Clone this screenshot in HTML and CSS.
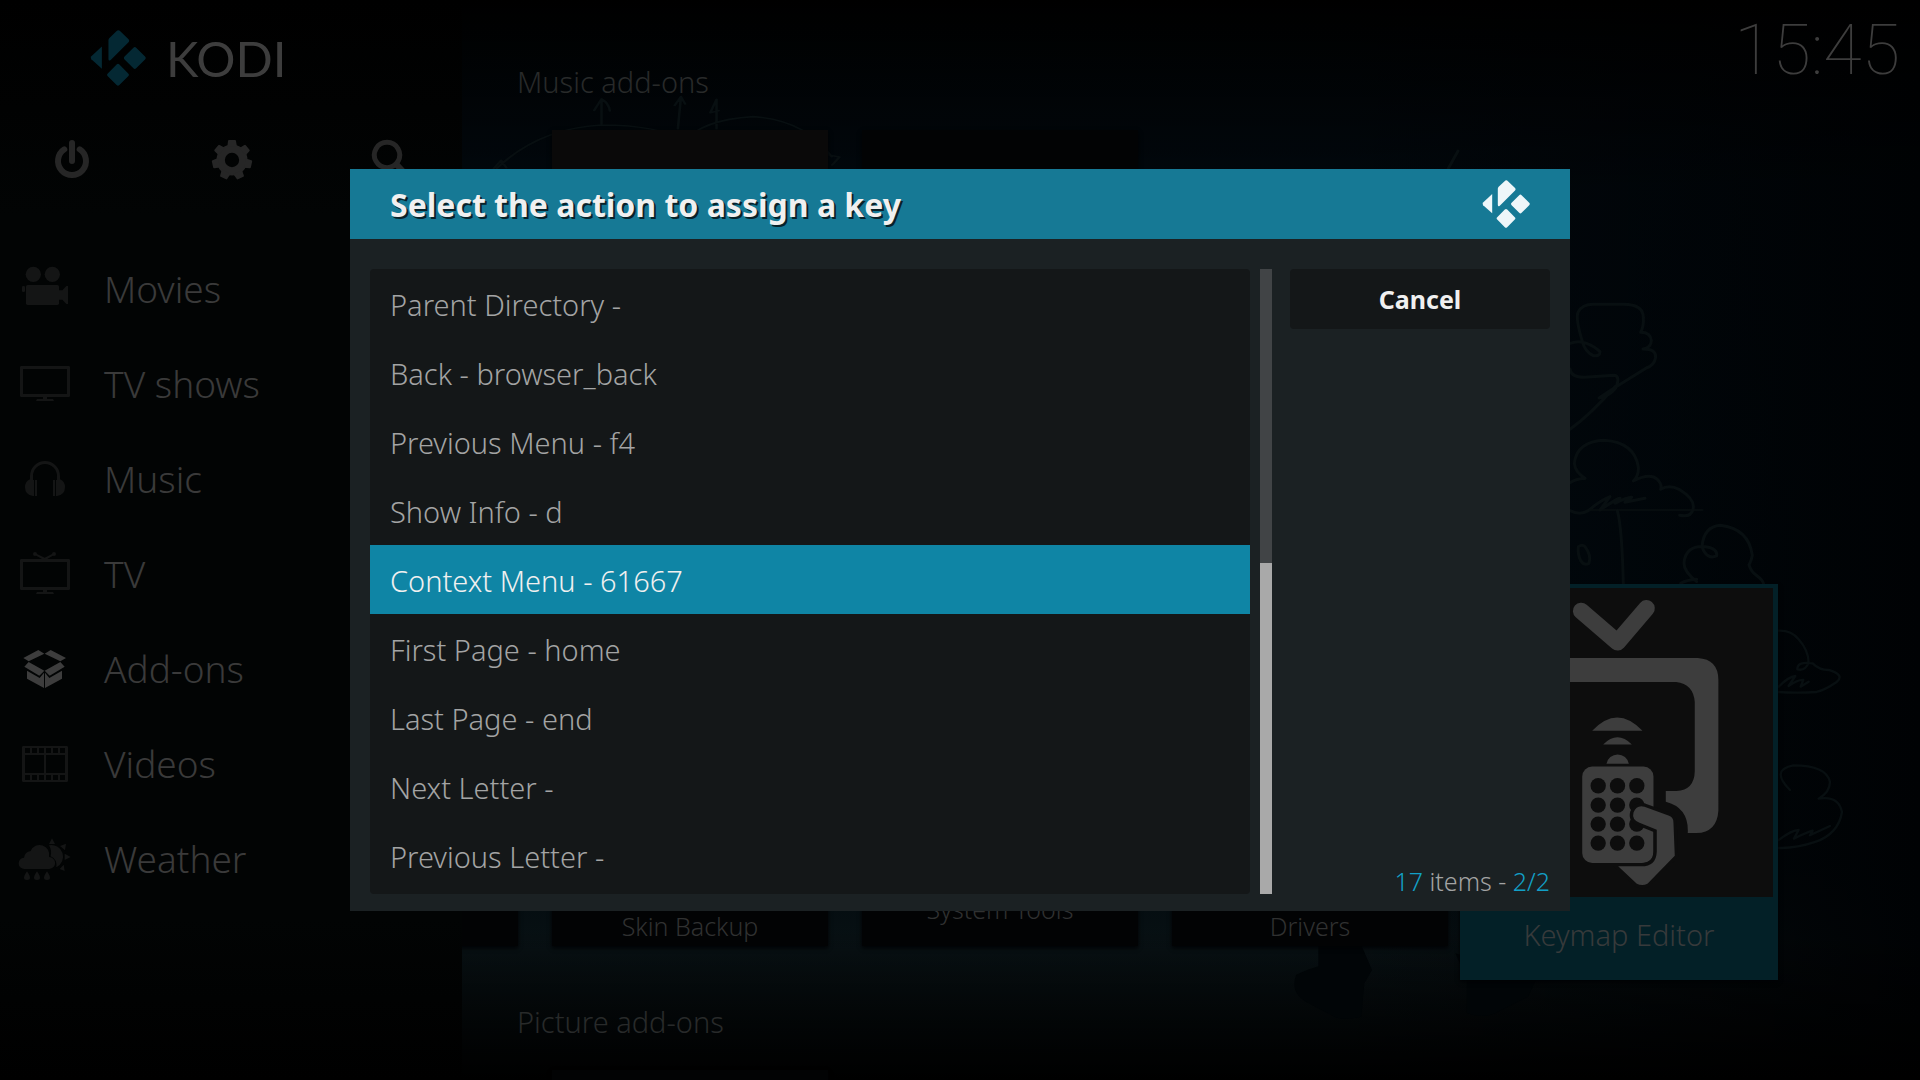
FILE: index.html
```html
<!DOCTYPE html>
<html lang="en">
<head>
    <meta charset="UTF-8">
    <meta name="viewport" content="width=device-width, initial-scale=1.0">
    <title>Kodi</title>
    <link rel="stylesheet" href="styles.css">
</head>
<body>

<div class="home">
    <nav class="sidebar">
        <div class="brand">
            <svg class="brand-mark" viewBox="269 89 168 170">
                <path d="M324 120q0-4 3-7l21-20q6-6 12 0l25 24q4 5 0 9l-54 54q-7 5-7-3z"/>
                <path d="M304 139v68l-32-29q-4-4 0-9z"/>
                <rect x="379" y="149" width="50" height="50" rx="6" transform="rotate(45 404 174)"/>
                <rect x="328" y="200" width="50" height="50" rx="6" transform="rotate(45 353 225)"/>
            </svg>
            <span class="brand-name">KODI</span>
        </div>

        <div class="tools">
            <button class="tool" aria-label="Power">
                <svg viewBox="144 408 144 144">
                    <path class="line" d="M193 448a42 42 0 1 0 46 0M216 429v54"/>
                </svg>
            </button>
            <button class="tool" aria-label="Settings">
                <svg viewBox="624 408 144 144">
                    <circle class="gear-ring" cx="696" cy="480" r="34"/>
                    <path id="tooth" d="M682 440l2-17q0-3 3-3h18q3 0 3 3l3 17z"/>
                    <use href="#tooth" transform="rotate(51.4 696 480)"/>
                    <use href="#tooth" transform="rotate(102.9 696 480)"/>
                    <use href="#tooth" transform="rotate(154.3 696 480)"/>
                    <use href="#tooth" transform="rotate(205.7 696 480)"/>
                    <use href="#tooth" transform="rotate(257.1 696 480)"/>
                    <use href="#tooth" transform="rotate(308.6 696 480)"/>
                </svg>
            </button>
            <button class="tool" aria-label="Search">
                <svg viewBox="1104 408 144 144">
                    <path class="line thin" d="M1161 427a38 38 0 1 0 .1 0z"/>
                    <path class="line" d="M1190 494l32 34"/>
                </svg>
            </button>
        </div>

        <ul class="menu">
            <li><a href="#movies">
                <svg viewBox="54 105 162 144">
                    <circle cx="100" cy="133" r="23"/><circle cx="157" cy="133" r="23"/>
                    <rect x="78" y="165" width="99" height="60" rx="5"/>
                    <rect x="66" y="168" width="9" height="18" rx="4"/>
                    <path d="M177 181h10l12-13h5v54h-5l-12-13h-10z"/>
                </svg>
                Movies</a></li>
            <li><a href="#tvshows">
                <svg viewBox="54 390 162 144">
                    <path fill-rule="evenodd" d="M64 408h142q4 0 4 4v85q0 4-4 4H64q-4 0-4-4v-85q0-4 4-4zM69 417v75h132v-75z"/>
                    <path d="M129 501h12v6h18l3 6h-54l3-6h18z"/>
                </svg>
                TV shows</a></li>
            <li><a href="#music">
                <svg viewBox="54 675 162 144">
                    <path d="M90 748v-10a45 45 0 0 1 90 0v10q15 6 15 24 0 22-24 26h-3v-48h3v-12a36 36 0 0 0-72 0v12h3v48h-3q-24-4-24-26 0-18 15-24z"/>
                    <path d="M105 750h6v48h-6zM159 750h6v48h-6z"/>
                </svg>
                Music</a></li>
            <li><a href="#tv">
                <svg viewBox="54 0 162 144">
                    <path fill-rule="evenodd" d="M64 27h142q4 0 4 4v85q0 4-4 4H64q-4 0-4-4V31q0-4 4-4zM69 36v75h132V36z"/>
                    <path d="M129 120h12v6h18l3 6h-54l3-6h18z"/>
                    <circle cx="105" cy="12" r="6"/><circle cx="162" cy="12" r="6"/>
                    <path d="M105 9l29 14 28-14v6l-20 12h-16l-21-12z"/>
                </svg>
                TV</a></li>
            <li class="current"><a href="#addons">
                <svg viewBox="54 285 162 144">
                    <path d="M115 300l18 11-47 23-16-10zM152 300l-18 11 47 23 17-10z"/>
                    <path d="M86 336l47 26-15 15-45-27zM181 336l-47 26 15 15 45-27z"/>
                    <path d="M81 362l38 22 13-16v46l-51-28zM186 362l-38 22-13-16v46l51-28z"/>
                </svg>
                Add-ons</a></li>
            <li><a href="#videos">
                <svg viewBox="54 570 162 144">
                    <path fill-rule="evenodd" d="M70 588h130q4 0 4 4v100q0 4-4 4H70q-4 0-4-4V592q0-4 4-4zM75 615v54h57v-54zM138 615v54h57v-54zM75 594v15h15v-15zM96 594v15h15v-15zM117 594v15h15v-15zM138 594v15h15v-15zM159 594v15h15v-15zM180 594v15h15v-15zM75 675v15h15v-15zM96 675v15h15v-15zM117 675v15h15v-15zM138 675v15h15v-15zM159 675v15h15v-15zM180 675v15h15v-15z"/>
                </svg>
                Videos</a></li>
            <li><a href="#weather">
                <svg viewBox="54 855 162 144">
                    <path d="M74 957a17 17 0 0 1-2-34q3-18 20-20a29 29 0 0 1 55 18 18 18 0 0 1 1 36z"/>
                    <path d="M147 886a35 35 0 0 1 22 66q3-24-17-33 4-18-5-33z"/>
                    <path d="M156 865l9 17h-18zM198 881l-3 20-15-13zM212 921l-18 9v-19zM194 963l-15-6 12-13z"/>
                    <path d="M81 964q18 26 0 26t0-26zM111 964q18 26 0 26t0-26zM141 964q18 26 0 26t0-26z"/>
                </svg>
                Weather</a></li>
        </ul>
    </nav>

    <main class="content">
        <!-- chalk drawing wallpaper -->
        <svg class="wallpaper" viewBox="462 0 1458 1080" preserveAspectRatio="xMaxYMin slice" aria-hidden="true">
            <g transform="translate(1560 280) scale(.3333)" stroke-width="9">
                <path d="M30 190q25-10 50 0t40 25q0 15-20 12-25-12-32-40-22-70-14-90 12-24 46-24h90q60 0 60 40 2 25-8 44 30 0 32 25 0 20-25 25 40 0 38 25-4 25-28 32l-100 62-42 28q30-5 50-30 15-35-4-38l-90 6q-40 0-43-25M165 320q-70 80-135 128"/>
                <path d="M75 595q-30-20-32-45 8-66 90-69 90 6 102 80 2 25-15 42 50-25 72-5 15 15 10 30 25-15 55 0 50 30 42 60-6 25-40 18M30 608q20-12 45-13M30 692q30 15 55 0 35-30 65-42l-30 40q60-40 60-35l-15 15q40-20 50-18l-20 15 60-12"/>
                <path stroke-width="5" d="M90 690h338"/>
                <path d="M172 692q14 50 18 220M55 800q12-8 20 0 20 26 12 50-15 8-25-8-10-20-7-42"/>
                <path d="M410 905q-38-30-38-55 4-55 64-50 38 5 34 28-30 12-44-28 5-60 55-64 85 10 96 90-4 20-10 28 5 20 22 32 20 15 22 26M410 898q-30 2-48 12"/>
            </g>
            <g transform="translate(1380 560) scale(.3333)" stroke-width="7">
                <path d="M1194 212q40-2 62 26 30 34 30 70-10 26-34 20 0-25 46-18 20 20 48 20 50 15 24 36-35 24-60 30-60 4-116 0M1196 380q30-30 50-32l-20 30q30-20 44-18l-8 20 24-15"/>
                <path d="M1230 690q-60-60 10-74 100 0 110 50 0 30-34 50 60-10 70 40-10 65-80 90-60 20-110 18M1196 840q40-30 60-30l-14 26q40-20 56-24l-8 14 60-28"/>
            </g>
            <g transform="translate(340 60) scale(.523 .3333)" stroke-width="5">
                <path d="M300 325q80-120 200-130 110 0 160 50 30-65 130-75 100 10 150 120M500 192v-75l-14 34M500 117q14 12 16 36M646 206l6-96-12 26M652 110l8 22M720 206v-88l-12 40 16-6M294 325l14-24 10 22M935 285l20 6-14 24"/>
            </g>
            <g class="shoes" transform="translate(1000 840) scale(.3827 .3333)">
                <path d="M832 310h110l30 80-20 40-8 100q-50 12-70 0l-60-36q-60-30-40-90l30-15 28-10zM1190 340l30 80v100q50 20 90-10l70-40 20-50z"/>
            </g>
            <path stroke-width="3" d="M1458 151l-10 18"/>
        </svg>

        <section class="rail">
            <h2>Music add-ons</h2>
            <div class="cards">
                <div class="card warm"></div>
                <div class="card"></div>
            </div>
        </section>

        <section class="rail scrolled">
            <div class="cards">
                <div class="card"></div>
                <div class="card"><span class="label low">Skin Backup</span></div>
                <div class="card"><span class="label">System Tools</span></div>
                <div class="card"><span class="label low">Drivers</span></div>
                <div class="card focused">
                    <svg class="poster" viewBox="255 84 925 927">
                        <path class="antenna" d="M604 153l109 94 87-102"/>
                        <path d="M476 294h478q62 4 62 66v392q-4 66-66 68h-26q4-76-66-94v-32h32q54-4 55-60V426q-4-54-56-60H538q-54 4-56 60v208q4 56 56 60h32v126h-94q-62-4-64-66V360q4-62 64-66z"/>
                        <path d="M637 513q75-80 151 0zM670 554q43-43 86 0zM680 612a34 34 0 0 1 67 0z"/>
                        <rect x="607" y="620" width="214" height="290" rx="30"/>
                        <g class="keys">
                            <circle cx="655" cy="678" r="23"/><circle cx="713" cy="678" r="23"/><circle cx="771" cy="678" r="23"/>
                            <circle cx="655" cy="736" r="23"/><circle cx="713" cy="736" r="23"/><circle cx="771" cy="736" r="23"/>
                            <circle cx="655" cy="793" r="23"/><circle cx="713" cy="793" r="23"/><circle cx="771" cy="793" r="23"/>
                            <circle cx="655" cy="850" r="23"/><circle cx="713" cy="850" r="23"/><circle cx="771" cy="850" r="23"/>
                        </g>
                        <path class="hand" d="M794 741l74 27q13 5 13 20l4 100-82 84q-16 8-32 0l-56-52h70q44 0 46-44v-66l-52-21q-24-10-18-31 10-24 33-17z"/>
                    </svg>
                    <span class="label">Keymap Editor</span>
                </div>
            </div>
        </section>

        <section class="rail">
            <h2>Picture add-ons</h2>
            <div class="cards">
                <div class="card"></div>
            </div>
        </section>

        <time class="clock">15:45</time>
    </main>
</div>

<div class="overlay">
    <div class="dialog" role="dialog" aria-labelledby="dialog-title">
        <header class="dialog-header">
            <h1 id="dialog-title">Select the action to assign a key</h1>
            <svg class="dialog-logo" viewBox="269 89 168 170">
                <path d="M324 120q0-4 3-7l21-20q6-6 12 0l25 24q4 5 0 9l-54 54q-7 5-7-3z"/>
                <path d="M304 139v68l-32-29q-4-4 0-9z"/>
                <rect x="379" y="149" width="50" height="50" rx="6" transform="rotate(45 404 174)"/>
                <rect x="328" y="200" width="50" height="50" rx="6" transform="rotate(45 353 225)"/>
            </svg>
        </header>
        <div class="dialog-body">
            <ul class="actions">
                <li><button>Parent Directory -</button></li>
                <li><button>Back - browser_back</button></li>
                <li><button>Previous Menu - f4</button></li>
                <li><button>Show Info - d</button></li>
                <li><button class="selected">Context Menu - 61667</button></li>
                <li><button>First Page - home</button></li>
                <li><button>Last Page - end</button></li>
                <li><button>Next Letter -</button></li>
                <li><button>Previous Letter -</button></li>
            </ul>
            <div class="scrollbar"><div class="thumb"></div></div>
            <div class="side">
                <button class="cancel">Cancel</button>
                <p class="count"><b>17</b> items - <b>2/2</b></p>
            </div>
        </div>
    </div>
</div>

</body>
</html>
```
FILE: styles.css
```css
* {
    box-sizing: border-box;
}

body {
    margin: 0;
    background-color: #000;
    font-family: "Noto Sans", sans-serif;
    font-weight: 300;
    overflow: hidden;
}

h1, h2, p, ul {
    margin: 0;
    padding: 0;
}

ul {
    list-style: none;
}

button {
    border: none;
    font-family: inherit;
    cursor: pointer;
}

.home {
    display: flex;
    height: 100vh;
}

/* Sidebar */
.sidebar {
    width: 462px;
    flex-shrink: 0;
    background: linear-gradient(#000, #020404 20%, #020404 85%, #000);
}

.brand {
    display: flex;
    align-items: center;
    gap: 20px;
    height: 116px;
    padding-left: 90px;
}

.brand-mark {
    width: 56px;
    height: 56px;
    fill: #042833;
}

.brand-name {
    font-family: Lato, sans-serif;
    font-size: 49px;
    font-weight: 400;
    line-height: 54px;
    color: #3d3d3d;
}

.tools {
    display: flex;
    align-items: center;
    gap: 112px;
    height: 88px;
    padding-left: 48px;
}

.tool {
    width: 48px;
    height: 48px;
    padding: 0;
    background: none;
    fill: #262626;
}

.tool svg {
    display: block;
    width: 48px;
    height: 48px;
}

.line {
    fill: none;
    stroke: #262626;
    stroke-width: 18;
    stroke-linecap: round;
}

.thin {
    stroke-width: 15;
}

.gear-ring {
    fill: none;
    stroke: #262626;
    stroke-width: 25;
}

.menu {
    margin-top: 37px;
}

.menu a {
    display: flex;
    align-items: center;
    gap: 32px;
    height: 95px;
    padding-left: 18px;
    font-size: 37px;
    color: #3a3a3a;
    text-decoration: none;
}

.menu svg {
    width: 54px;
    height: 48px;
    fill: #141515;
}

.menu .current svg {
    fill: #3d3d3d;
}

/* Add-on rails */
.content {
    position: relative;
    flex: 1;
    padding-top: 60px;
    overflow: hidden;
    background:
        linear-gradient(#000, transparent 18%, transparent 86%, #000),
        linear-gradient(90deg, transparent 60%, #000204),
        linear-gradient(#01070c, #010a10 50%, #020a0e 80%, #081114 88%, #050b0d);
}

.wallpaper {
    position: absolute;
    inset: 0;
    width: 100%;
    height: 100%;
    fill: none;
    stroke: #080f11;
    stroke-linecap: round;
    stroke-linejoin: round;
}

.shoes {
    fill: #010507;
    stroke: none;
}

.rail {
    position: relative;
    height: 470px;
}

.rail h2 {
    height: 70px;
    padding-left: 55px;
    font-size: 29px;
    font-weight: 300;
    line-height: 44px;
    color: #282a2a;
}

.cards {
    display: flex;
    gap: 34px;
    padding-left: 90px;
}

.scrolled {
    padding-top: 70px;
}

.scrolled .cards {
    padding: 0;
    margin-left: -220px;
}

.card {
    display: flex;
    flex-direction: column;
    justify-content: flex-end;
    flex-shrink: 0;
    width: 276px;
    height: 346px;
    background-color: #020304;
    box-shadow: 0 2px 4px #000204;
}

.warm {
    background-color: #0a0909;
}

.label {
    display: flex;
    align-items: center;
    justify-content: center;
    height: 72px;
    padding-bottom: 3px;
    font-size: 25px;
    line-height: 34px;
    color: #303131;
}

.low {
    align-items: flex-end;
}

.focused {
    width: 318px;
    height: 396px;
    margin: -16px 0 0 -22px;
    padding: 4px 5px;
    background-color: #032027;
}

.focused .label {
    flex: 1;
    font-size: 29px;
    color: #373a3b;
}

.poster {
    width: 100%;
    background-color: #0d0d0d;
    fill: #3d3d3d;
}

.antenna {
    fill: none;
    stroke: #3d3d3d;
    stroke-width: 50;
    stroke-linecap: round;
    stroke-linejoin: round;
}

.keys {
    fill: #0d0d0d;
}

.hand {
    stroke: #0d0d0d;
    stroke-width: 20;
    paint-order: stroke;
}

.clock {
    position: absolute;
    top: 9px;
    right: 20px;
    font-family: Roboto, sans-serif;
    font-size: 70px;
    font-weight: 100;
    line-height: 82px;
    color: #3d3d3d;
}

/* Dialog */
.overlay {
    position: fixed;
    inset: 0;
    display: flex;
    align-items: center;
    justify-content: center;
}

.dialog {
    width: 1220px;
    max-width: 100%;
    background-color: #1b2123;
}

.dialog-header {
    display: flex;
    align-items: center;
    justify-content: space-between;
    height: 70px;
    padding: 0 40px;
    background-color: #167995;
}

.dialog-header h1 {
    font-size: 32px;
    font-weight: 700;
    color: #f0f0f0;
    text-shadow: 2px 2px 0 #08222a;
}

.dialog-logo {
    width: 48px;
    height: 48px;
    fill: #eef6f9;
}

.dialog-body {
    display: flex;
    padding: 30px 20px 17px;
}

.actions {
    flex: 1;
    padding-bottom: 4px;
    border-radius: 4px;
    background-color: #141718;
}

.actions button {
    display: block;
    width: 100%;
    height: 69px;
    padding: 2px 20px 0;
    background: none;
    font-size: 29px;
    font-weight: 300;
    text-align: left;
    color: #a3a4a4;
}

.actions .selected {
    background-color: #0f85a5;
    color: #f0f0f0;
}

.scrollbar {
    display: flex;
    flex-direction: column;
    justify-content: flex-end;
    width: 12px;
    margin: 0 18px 0 10px;
    background-color: #414446;
}

.thumb {
    height: 53%;
    background-color: #a9a9a9;
}

.side {
    display: flex;
    flex-direction: column;
    justify-content: space-between;
    width: 260px;
}

.cancel {
    height: 60px;
    border-radius: 4px;
    background-color: #141718;
    font-size: 25px;
    font-weight: 700;
    color: #f0f0f0;
}

.count {
    font-size: 25px;
    line-height: 26px;
    text-align: right;
    color: #a3a4a4;
}

.count b {
    font-weight: 300;
    color: #12a0c7;
}
```
